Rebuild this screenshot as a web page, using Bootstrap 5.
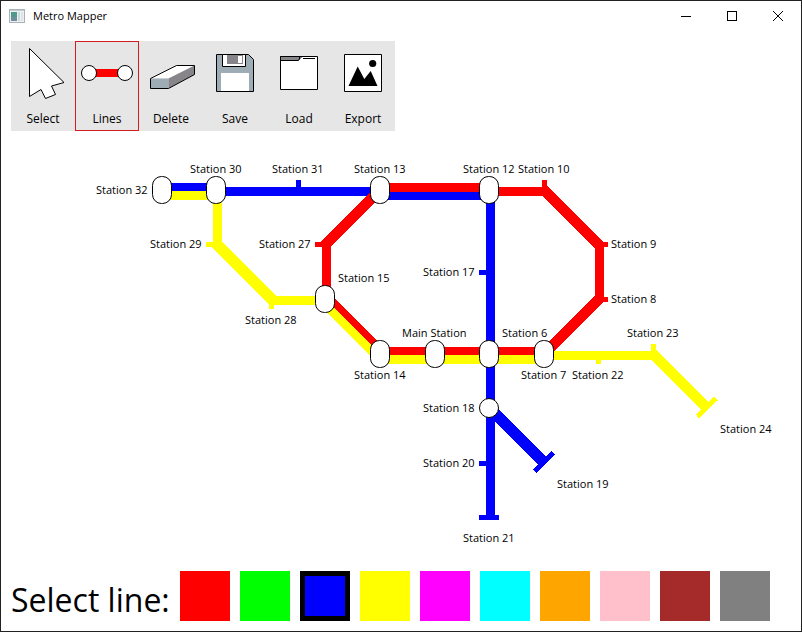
<!DOCTYPE html>
<html lang="en">
<head>
<meta charset="utf-8">
<meta name="viewport" content="width=device-width, initial-scale=1">
<title>Metro Mapper</title>
<link href="https://cdn.jsdelivr.net/npm/bootstrap@5.3.0/dist/css/bootstrap.min.css" rel="stylesheet">
<style>
  body { font-family: "Open Sans", "Noto Sans", sans-serif; color: #000; background: #fff; }
  .app-window { border: 1px solid #222; }
  .title-bar { height: 29px; margin-bottom: 1px; padding-left: 8px; }
  .app-title { font-size: 11px; line-height: 16px; font-weight: 400; }
  .win-btn { width: 46px; height: 29px; color: #000; }
  .win-btn:hover { background: #e5e5e5; }
  .tool-strip { margin: 10px 10px 0; background: #e6e6e6; }
  .tool-btn { width: 64px; height: 90px; font-size: 12px; line-height: 24px; color: #000; background: transparent; }
  .tool-btn.active { box-shadow: inset 0 0 0 1px #d21e1e; }
  .tool-btn svg, .win-btn svg { display: block; }
  .tool-btn svg { margin-bottom: 2px; }
  .map-canvas { min-height: 0; }
  .map-canvas text { font-size: 11px; }
  .track { fill: none; stroke-width: 9; }
  .wide { stroke-width: 11; }
  .stop-tick { stroke-width: 5; }
  .c-red { stroke: #f00; }
  .c-blue { stroke: #00f; }
  .c-yellow { stroke: #ff0; }
  .hub { fill: #fff; stroke: #000; }
  .picker { padding: 0 10px 10px; gap: 10px; }
  .picker-label { font-size: 32px; line-height: 42px; padding-top: 8px; }
  .swatch { appearance: none; width: 50px; height: 50px; margin: 0; border: 0; cursor: pointer; }
  .swatch:checked { border: 5px solid #000; }
  .sw-red { background: red; }
  .sw-green { background: lime; }
  .sw-blue { background: blue; }
  .sw-yellow { background: yellow; }
  .sw-magenta { background: magenta; }
  .sw-cyan { background: cyan; }
  .sw-orange { background: orange; }
  .sw-pink { background: pink; }
  .sw-brown { background: brown; }
  .sw-gray { background: gray; }
</style>
</head>
<body>
<div class="app-window d-flex flex-column min-vh-100">
  <header class="title-bar d-flex align-items-center">
    <svg class="me-1" width="16" height="14" viewBox="0 0 16 14" aria-hidden="true">
      <rect x=".5" y=".5" width="15" height="13" fill="#edf1f2" stroke="#a9b2b7"/>
      <path d="M1 1.500H15" stroke="#c3ccd0"/>
      <rect x="2" y="3" width="6" height="9" fill="#4f9a8d"/>
      <rect x="2" y="8" width="6" height="4" fill="#6f8d9b"/>
      <rect x="9" y="3" width="2" height="9" fill="#ccd8dc"/>
      <rect x="12" y="3" width="2" height="9" fill="#dde3e6"/>
    </svg>
    <h1 class="app-title mb-0 ms-1 me-auto">Metro Mapper</h1>
    <button type="button" class="win-btn btn rounded-0 border-0 p-0" aria-label="Minimize">
      <svg class="mx-auto" width="10" height="10" viewBox="0 0 10 10"><path d="M0 5.500H10" stroke="#000"/></svg>
    </button>
    <button type="button" class="win-btn btn rounded-0 border-0 p-0" aria-label="Maximize">
      <svg class="mx-auto" width="10" height="10" viewBox="0 0 10 10"><rect x=".5" y=".5" width="9" height="9" fill="none" stroke="#000"/></svg>
    </button>
    <button type="button" class="win-btn btn rounded-0 border-0 p-0" aria-label="Close">
      <svg class="mx-auto" width="10" height="10" viewBox="0 0 10 10"><path d="M0 0 10 10M10 0 0 10" stroke="#000"/></svg>
    </button>
  </header>

  <main class="d-flex flex-column flex-grow-1">
    <div class="tool-strip d-flex flex-wrap align-self-start" role="toolbar" aria-label="Tools">
      <button type="button" class="tool-btn border-0 p-0">
        <svg width="64" height="64" viewBox="0 0 64 64"><path d="M18.500 7.500 53 41.500 40.500 45 44.500 53.500 34.500 57.500 30 48.500 18.500 55.500Z" fill="#fff" stroke="#000"/></svg>
        Select
      </button>
      <button type="button" class="tool-btn active border-0 p-0" aria-pressed="true">
        <svg width="64" height="64" viewBox="0 0 64 64"><path d="M20 32H45" stroke="#f00" stroke-width="8"/><g fill="#fff" stroke="#000"><circle cx="14" cy="32" r="7.500"/><circle cx="50" cy="32" r="7.500"/></g></svg>
        Lines
      </button>
      <button type="button" class="tool-btn border-0 p-0">
        <svg width="64" height="64" viewBox="0 0 64 64"><path d="M11.500 37.500 37.500 24.500H55.500L29.500 37.500Z" fill="#fff"/><path d="M11.500 37.500H29.500V47.500H11.500Z" fill="#9dacb5"/><path d="M29.500 37.500 55.500 24.500V33.500L29.500 47.500Z" fill="#87848a"/><path d="M11.500 37.500 37.500 24.500H55.500V33.500L29.500 47.500H11.500Z" fill="none" stroke="#000"/></svg>
        Delete
      </button>
      <button type="button" class="tool-btn border-0 p-0">
        <svg width="64" height="64" viewBox="0 0 64 64"><path d="M13.500 13.500H45.500L50.500 18.500V50.500H13.500Z" fill="#9dacb5" stroke="#000"/><path d="M18 32H46V50H18Z" fill="#fff"/><path d="M19.500 13.500H42.500V25.500H19.500Z" fill="#fff" stroke="#000"/><path d="M24 14H40V23H24Z" fill="#87848a"/><path d="M35 15H39V22H35Z" fill="#fff"/></svg>
        Save
      </button>
      <button type="button" class="tool-btn border-0 p-0">
        <svg width="64" height="64" viewBox="0 0 64 64"><path d="M13.500 15.500H50.500V48.500H13.500Z" fill="#fff" stroke="#000"/><path d="M13.500 15.500H32.500V18L31.500 19.500H13.500Z" fill="#87848a" stroke="#000"/><path d="M32 18.500 34.500 16" stroke="#000"/><path d="M36 17.500H48" stroke="#000"/></svg>
        Load
      </button>
      <button type="button" class="tool-btn border-0 p-0">
        <svg width="64" height="64" viewBox="0 0 64 64"><path d="M13.500 13.500H50.500V50.500H13.500Z" fill="#fff" stroke="#000"/><path d="M17.500 45 26.700 25.500 33.300 38 39.700 30 46.500 45Z"/><circle cx="41.700" cy="22.500" r="3.600"/></svg>
        Export
      </button>
    </div>

    <svg class="map-canvas w-100 flex-grow-1" viewBox="1 131 800 440" preserveAspectRatio="xMidYMid meet" role="img" aria-label="Metro map">
      <g class="track" shape-rendering="crispEdges">
        <!-- Blue line -->
        <g class="c-blue">
          <path d="M162 187.500H216M216 191.500H380M380 195.500H490M490.500 190V516"/>
          <path class="wide" d="M490 408.500 543 461.500"/>
          <path class="stop-tick" d="M298.500 180V188M479 272.500H487M479 463.500H487M479 517.500H499M534.500 471.500 553 453"/>
        </g>
        <!-- Red line -->
        <g class="c-red">
          <path d="M380 187.500H489M489 191.500H545.500M599.500 245.500V299M326.500 299V243.500M380 351.500H544M325 294.500 380 349.500"/>
          <path class="wide" d="M380 190 324.500 245.500M601 297 545 353M543.500 189.500 601 247"/>
          <path class="stop-tick" d="M544.500 180V190M600 244.500H608M600 299.500H608M315 244.500H326"/>
        </g>
        <!-- Yellow line -->
        <g class="c-yellow">
          <path d="M162 195.500H216M217.500 195V245M272 300.500H325M325 304.500 380 359.500M380 359.500H544M544 355.500H654"/>
          <path class="wide" d="M216 243.500 273 300.500M653 354 706 407"/>
          <path class="stop-tick" d="M206 244.500H217M271.500 301V309M598.500 358V364M653.500 344V354M697.500 416.500 716 398.500"/>
        </g>
      </g>
      <g class="hub">
        <rect x="152.500" y="176.500" width="19" height="27" rx="9"/>
        <rect x="206.500" y="176.500" width="19" height="27" rx="9"/>
        <rect x="370.500" y="176.500" width="19" height="27" rx="9"/>
        <rect x="479.500" y="176.500" width="19" height="27" rx="9"/>
        <rect x="315.500" y="285.500" width="19" height="27" rx="9"/>
        <rect x="370.500" y="340.500" width="19" height="27" rx="9"/>
        <rect x="425.500" y="340.500" width="19" height="27" rx="9"/>
        <rect x="479.500" y="340.500" width="19" height="27" rx="9"/>
        <rect x="534.500" y="340.500" width="19" height="27" rx="9"/>
        <circle cx="489" cy="408" r="9.500"/>
      </g>
      <g>
        <text x="96" y="194">Station 32</text>
        <text x="190" y="173">Station 30</text>
        <text x="272" y="173">Station 31</text>
        <text x="354" y="173">Station 13</text>
        <text x="463" y="173">Station 12</text>
        <text x="518" y="173">Station 10</text>
        <text x="150" y="248">Station 29</text>
        <text x="259" y="248">Station 27</text>
        <text x="611" y="248">Station 9</text>
        <text x="338" y="282">Station 15</text>
        <text x="423" y="276">Station 17</text>
        <text x="611" y="303">Station 8</text>
        <text x="245" y="324">Station 28</text>
        <text x="402" y="337">Main Station</text>
        <text x="502" y="337">Station 6</text>
        <text x="627" y="337">Station 23</text>
        <text x="354" y="379">Station 14</text>
        <text x="521" y="379">Station 7</text>
        <text x="572" y="379">Station 22</text>
        <text x="423" y="412">Station 18</text>
        <text x="720" y="433">Station 24</text>
        <text x="423" y="467">Station 20</text>
        <text x="557" y="488">Station 19</text>
        <text x="463" y="542">Station 21</text>
      </g>
    </svg>

    <div class="picker d-flex flex-wrap align-items-center" role="radiogroup" aria-labelledby="picker-label">
      <span id="picker-label" class="picker-label">Select line:</span>
      <input type="radio" name="line" class="swatch sw-red" aria-label="Red">
      <input type="radio" name="line" class="swatch sw-green" aria-label="Green">
      <input type="radio" name="line" class="swatch sw-blue" aria-label="Blue" checked>
      <input type="radio" name="line" class="swatch sw-yellow" aria-label="Yellow">
      <input type="radio" name="line" class="swatch sw-magenta" aria-label="Magenta">
      <input type="radio" name="line" class="swatch sw-cyan" aria-label="Cyan">
      <input type="radio" name="line" class="swatch sw-orange" aria-label="Orange">
      <input type="radio" name="line" class="swatch sw-pink" aria-label="Pink">
      <input type="radio" name="line" class="swatch sw-brown" aria-label="Brown">
      <input type="radio" name="line" class="swatch sw-gray" aria-label="Gray">
    </div>
  </main>
</div>
<script src="https://cdn.jsdelivr.net/npm/bootstrap@5.3.0/dist/js/bootstrap.bundle.min.js"></script>
</body>
</html>
